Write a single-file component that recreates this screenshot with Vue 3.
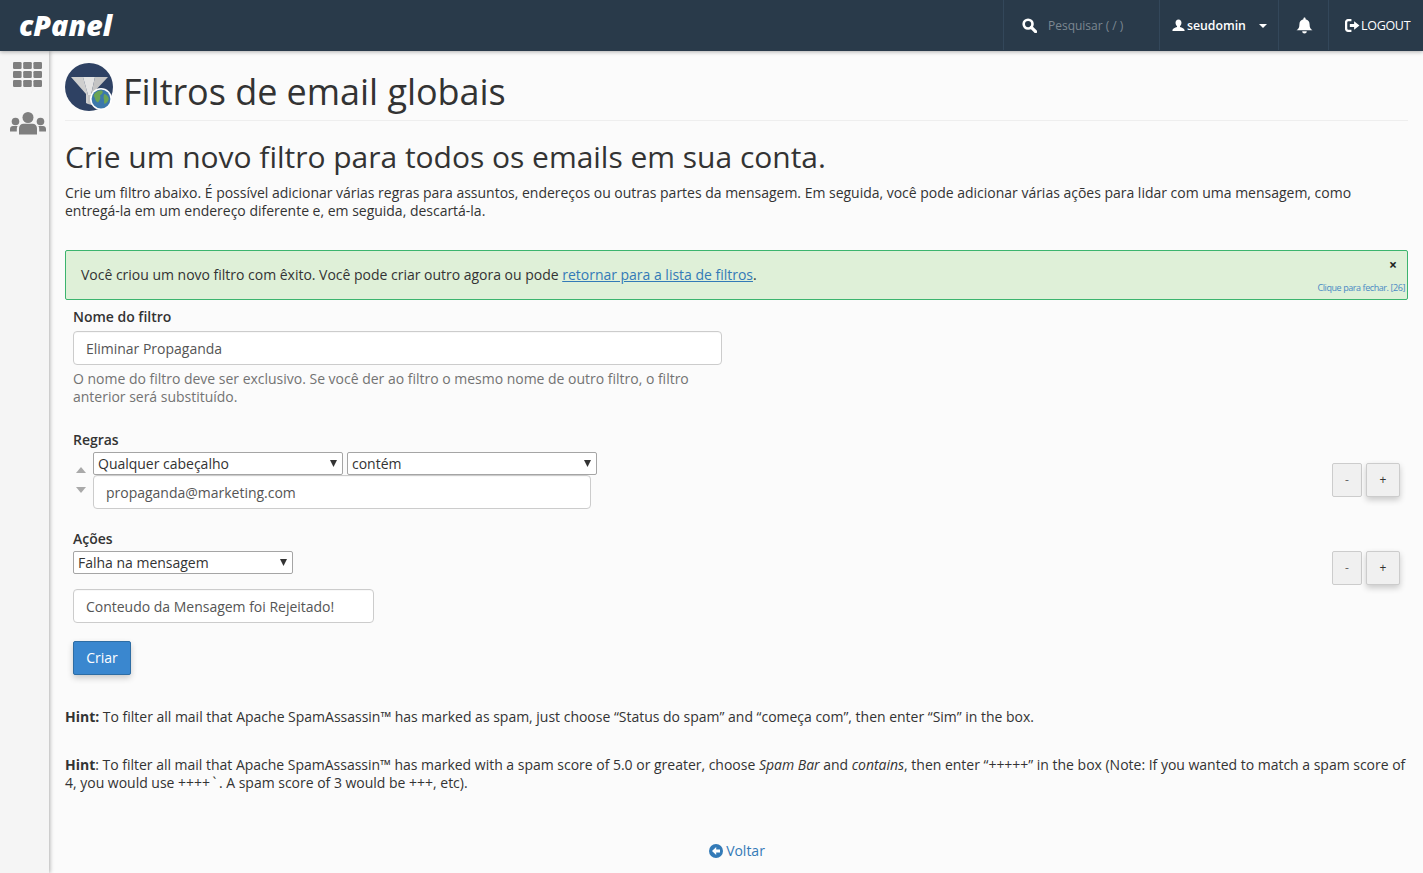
<script setup>
const gridCells = [0, 1, 2, 3, 4, 5, 6, 7, 8].map((i) => ({ x: (i % 3) * 10.2, y: Math.floor(i / 3) * 9, k: i }))
</script>

<template>
  <div class="page">
    <header class="topbar">
      <div class="logo">cPanel</div>
      <div class="nav">
        <div class="nav-item search">
          <svg class="ico-search" viewBox="0 0 16 16" width="15" height="15"><circle cx="6.500" cy="6.500" r="4.700" fill="none" stroke="#fff" stroke-width="2.800"/><path d="M10 10l4.500 4.500" stroke="#fff" stroke-width="3.400" stroke-linecap="round"/></svg>
          <span class="search-text">Pesquisar ( / )</span>
        </div>
        <div class="nav-item user">
          <svg viewBox="0 0 14 14" width="13" height="13"><path d="M7 0.500c2 0 3.200 1.500 3.200 3.600 0 1.600-.7 2.900-1.600 3.600v1c2.300.8 4.600 1.600 4.900 3.200v1.100H.5v-1.100c.3-1.600 2.600-2.400 4.900-3.200v-1C4.500 7 3.800 5.700 3.800 4.100 3.800 2 5 .5 7 .5z" fill="#fff"/></svg>
          <span class="user-name">seudomin</span>
          <span class="caret"></span>
        </div>
        <div class="nav-item bell">
          <svg viewBox="0 0 16 16" width="17" height="17"><path d="M8 0.500c.6 0 1 .4 1 1v.6c2.400.5 3.800 2.300 3.800 4.900 0 3 .8 4.200 2.700 5.500H.5c1.900-1.300 2.700-2.500 2.700-5.500C3.200 4.400 4.600 2.600 7 2.100v-.6c0-.6.4-1 1-1z" fill="#fff"/><path d="M5.800 13.300h4.400a2.200 2.200 0 0 1-4.400 0z" fill="#fff"/></svg>
        </div>
        <div class="nav-item logout">
          <svg viewBox="0 0 14 12" width="15" height="13"><path d="M6 1H3.200C1.900 1 1 1.900 1 3.200v5.600C1 10.100 1.900 11 3.200 11H6" fill="none" stroke="#fff" stroke-width="2.200"/><path d="M4.500 4.600h4V2l5 4-5 4V7.400h-4z" fill="#fff"/></svg>
          <span class="logout-text">LOGOUT</span>
        </div>
      </div>
    </header>

    <div class="body-row">
      <aside class="sidebar">
        <svg class="side-grid" viewBox="0 0 29 25" width="29" height="25">
          <rect v-for="c in gridCells" :key="c.k" :x="c.x" :y="c.y" width="8.600" height="7" rx="1.200" fill="#7f7f7f"/>
        </svg>
        <svg class="side-users" viewBox="0 0 36 23" width="36" height="23">
          <g fill="#7f7f7f">
            <circle cx="18" cy="5.500" r="5.500"/>
            <circle cx="5.500" cy="9.500" r="3.800"/>
            <circle cx="30.500" cy="9.500" r="3.800"/>
            <path d="M9 22.500v-6c0-3 2-4.800 4.500-4.800h9c2.500 0 4.500 1.800 4.500 4.800v6z"/>
            <path d="M0 19.500v-2.500c0-2 1.300-3 3-3h4.600C7 15 6.800 16 6.800 17v2.500z"/>
            <path d="M36 19.500v-2.500c0-2-1.300-3-3-3h-4.600c.6 1 .8 2 .8 3v2.500z"/>
          </g>
        </svg>
      </aside>

      <main class="content">
        <div class="title-row">
          <svg class="title-icon" viewBox="0 0 48 48" width="48" height="48">
            <circle cx="24" cy="24" r="24" fill="#2e4163"/>
            <path d="M6 14h12l5 18v9l-2-1v-9z" fill="#cfcfcf"/>
            <path d="M18 14h12l-4 18h-3z" fill="#e4e4e4"/>
            <path d="M30 14h13L27 31v11l-4-1v-9h3z" fill="#c4c4c4"/>
            <circle cx="36" cy="36" r="11" fill="#fff"/>
            <circle cx="36" cy="36" r="9.400" fill="#3c78ab"/>
            <path d="M29 31.500c2-3 5-4.500 8-4 2 2-.5 4-2 5 1 2.500 0 4.500-2 7-2.500-1-3-3.500-3.200-4.700-1-1-1.300-2.100-.8-3.300z" fill="#6aa455"/>
            <path d="M39 31c2.500.3 4.500 2.500 4.800 5-.7 2.500-2.600 4.500-4.200 5-1.300-2 .2-3.300-.9-5.500-.3-2 .2-3.500.3-4.500z" fill="#6aa455"/>
          </svg>
          <h1>Filtros de email globais</h1>
        </div>

        <h2>Crie um novo filtro para todos os emails em sua conta.</h2>
        <p class="intro">Crie um filtro abaixo. É possível adicionar várias regras para assuntos, endereços ou outras partes da mensagem. Em seguida, você pode adicionar várias ações para lidar com uma mensagem, como entregá-la em um endereço diferente e, em seguida, descartá-la.</p>

        <div class="alert">
          <span>Você criou um novo filtro com êxito. Você pode criar outro agora ou pode <a class="link">retornar para a lista de filtros</a>.</span>
          <span class="alert-close">×</span>
          <span class="alert-timer">Clique para fechar. [26]</span>
        </div>

        <form class="form" @submit.prevent>
          <label class="lbl first">Nome do filtro</label>
          <input class="field name-field" value="Eliminar Propaganda" />
          <p class="help">O nome do filtro deve ser exclusivo. Se você der ao filtro o mesmo nome de outro filtro, o filtro anterior será substituído.</p>

          <label class="lbl rules-lbl">Regras</label>
          <div class="rule-row">
            <div class="arrows">
              <span class="tri up"></span>
              <span class="tri down"></span>
            </div>
            <div class="rule-main">
              <div class="select-row">
                <select class="sel sel-a"><option>Qualquer cabeçalho</option></select>
                <select class="sel sel-b"><option>contém</option></select>
              </div>
              <input class="field rule-field" value="propaganda@marketing.com" />
            </div>
            <div class="pm pm-rule">
              <button type="button" class="pm-btn minus">-</button>
              <button type="button" class="pm-btn plus">+</button>
            </div>
          </div>

          <label class="lbl actions-lbl">Ações</label>
          <div class="action-row">
            <div>
              <select class="sel sel-c"><option>Falha na mensagem</option></select>
              <input class="field action-field" value="Conteudo da Mensagem foi Rejeitado!" />
            </div>
            <div class="pm">
              <button type="button" class="pm-btn minus">-</button>
              <button type="button" class="pm-btn plus">+</button>
            </div>
          </div>

          <button type="button" class="submit">Criar</button>
        </form>

        <p class="hint hint-a"><b>Hint:</b> To filter all mail that Apache SpamAssassin™ has marked as spam, just choose “Status do spam” and “começa com”, then enter “Sim” in the box.</p>
        <p class="hint hint-b"><b>Hint</b>: To filter all mail that Apache SpamAssassin™ has marked with a spam score of 5.0 or greater, choose <i>Spam Bar</i> and <i>contains</i>, then enter “+++++” in the box (Note: If you wanted to match a spam score of 4, you would use ++++<span class="tick">`</span>. A spam score of 3 would be +++, etc).</p>

        <div class="back">
          <svg viewBox="0 0 14 14" width="14" height="14"><circle cx="7" cy="7" r="7" fill="#337ab7"/><path d="M7.200 3L3 7l4.200 4V8.500H11v-3H7.200z" fill="#fff"/></svg>
          <a class="link-plain">Voltar</a>
        </div>
      </main>
    </div>
  </div>
</template>

<style scoped>
.page {
  width: 1423px;
  height: 873px;
  overflow: hidden;
  background: #fbfbfb;
  color: #333;
  font-family: "Open Sans", "Liberation Sans", sans-serif;
  font-size: 14px;
  line-height: 18px;
  letter-spacing: -0.012px;
}
.topbar {
  position: relative;
  z-index: 2;
  height: 51px;
  background: #293a4a;
  display: flex;
  justify-content: space-between;
  box-shadow: 0 1px 4px rgba(0, 0, 0, 0.3);
  color: #fff;
}
.logo {
  margin-left: 19px;
  font-weight: 800;
  font-style: italic;
  font-size: 28.500px;
  line-height: 50px;
  letter-spacing: 0;
}
.nav { display: flex; height: 50px; }
.nav-item {
  display: flex;
  align-items: center;
  border-left: 1px solid #33475a;
}
.search { width: 156px; padding-left: 18px; box-sizing: border-box; }
.search-text { margin-left: 11px; margin-top: 2px; color: #7c8791; font-size: 12px; }
.ico-search { flex: none; }
.user { width: 119px; box-sizing: border-box; padding-left: 12px; font-size: 12.300px; font-weight: 600; }
.user-name { margin-left: 2px; margin-top: 2px; }
.caret {
  margin-left: 13px;
  margin-top: 2px;
  border-left: 4px solid transparent;
  border-right: 4px solid transparent;
  border-top: 4px solid #fff;
}
.bell { width: 50px; justify-content: center; box-sizing: border-box; padding-left: 1px; }
.logout { width: 95px; box-sizing: border-box; padding-left: 16px; font-size: 12.500px; letter-spacing: -0.3px; }
.logout-text { margin-left: 1px; margin-top: 1px; }

.body-row { display: flex; height: 822px; }
.sidebar {
  position: relative;
  z-index: 1;
  width: 49px;
  flex: none;
  background: #f5f5f5;
  box-shadow: 1px 0 4px rgba(0, 0, 0, 0.3);
  display: flex;
  flex-direction: column;
  align-items: flex-start;
}
.side-grid { margin: 11px 0 0 13px; }
.side-users { margin: 25px 0 0 10px; }

.content { width: 1343px; margin-left: 16px; flex: none; }
.title-row {
  display: flex;
  align-items: flex-start;
  height: 69px;
  border-bottom: 1px solid #eee;
}
.title-icon { margin-top: 12px; flex: none; }
h1 {
  margin: 16px 0 0 10px;
  font-size: 36px;
  line-height: 50px;
  font-weight: 400;
  color: #333;
  letter-spacing: -0.04px;
}
h2 {
  margin: 19px 0 0;
  font-size: 30px;
  line-height: 33px;
  font-weight: 400;
  letter-spacing: -0.02px;
}
.intro { margin: 11px 0 0; }
.alert {
  position: relative;
  box-sizing: border-box;
  height: 50px;
  margin-top: 30px;
  padding: 15px;
  background: #dff0d8;
  border: 1px solid #3cb46e;
  border-radius: 2px;
}
.link { color: #337ab7; text-decoration: underline; }
.alert-close {
  position: absolute;
  right: 10px;
  top: 5px;
  color: #222;
  font-weight: 700;
  font-size: 14px;
}
.alert-timer {
  position: absolute;
  right: 2px;
  bottom: 5px;
  font-size: 9px;
  line-height: 12px;
  letter-spacing: -0.42px;
  color: #4a8ac4;
}
.form { padding-left: 8px; width: 1327px; }
.lbl { display: block; font-weight: 600; color: #333; }
.first { margin-top: 8px; }
.field {
  display: block;
  box-sizing: border-box;
  height: 34px;
  padding: 6px 12px;
  background: #fff;
  border: 1px solid #ccc;
  border-radius: 4px;
  font: inherit;
  letter-spacing: inherit;
  color: #555;
  outline: none;
  box-shadow: inset 0 1px 1px rgba(0, 0, 0, 0.03);
}
.name-field { width: 649px; margin-top: 5px; }
.help { width: 649px; margin: 5px 0 0; color: #737373; }
.rules-lbl { margin-top: 25px; }
.rule-row { display: flex; margin-top: 3px; position: relative; }
.arrows { width: 20px; flex: none; display: flex; flex-direction: column; align-items: flex-start; padding: 15px 0 0 3px; box-sizing: border-box; }
.tri { width: 0; height: 0; border-left: 5px solid transparent; border-right: 5px solid transparent; }
.up { border-bottom: 6px solid #a9a9a9; }
.down { margin-top: 14px; border-top: 6px solid #a9a9a9; }
.rule-main { flex: 1; }
.select-row { display: flex; gap: 4px; }
.sel {
  appearance: none;
  box-sizing: border-box;
  height: 23px;
  background-color: #fff;
  background-image: url("data:image/svg+xml,%3Csvg xmlns='http://www.w3.org/2000/svg' width='7' height='7'%3E%3Cpath d='M0 0h7L3.500 7z' fill='%23333'/%3E%3C/svg%3E");
  background-repeat: no-repeat;
  background-position: right 5px top 7px;
  border: 1px solid #a5a5a5;
  border-radius: 2px;
  font: inherit;
  letter-spacing: inherit;
  color: #333;
  padding: 0 0 0 4px;
}
.sel-a, .sel-b { width: 250px; }
.sel-c { width: 220px; display: block; }
.rule-field { width: 498px; }
.pm { display: flex; gap: 4px; flex: none; }
.pm-rule { margin-top: 11px; align-self: flex-start; }
.pm-btn {
  box-sizing: border-box;
  height: 34px;
  padding: 0;
  background: #f0f0f0;
  border: 1px solid #ccc;
  border-radius: 2px;
  font: inherit;
  font-size: 12px;
  color: #333;
}
.minus { width: 30px; color: #666; }
.plus { width: 34px; box-shadow: 0 3px 6px rgba(0, 0, 0, 0.2); }
.actions-lbl { margin-top: 21px; }
.action-row { display: flex; justify-content: space-between; margin-top: 3px; }
.action-field { width: 301px; margin-top: 15px; }
.submit {
  display: block;
  box-sizing: border-box;
  width: 58px;
  height: 34px;
  margin-top: 18px;
  background: #3a87cf;
  border: 1px solid #2e6da4;
  border-radius: 2px;
  color: #fff;
  font: inherit;
  box-shadow: 0 3px 6px rgba(0, 0, 0, 0.2);
}
.hint { margin: 0; }
.hint-a { margin-top: 33px; }
.hint-b { margin-top: 30px; }
.hint b { font-weight: 700; }
.tick { padding: 0 2.500px; }
.back {
  display: flex;
  justify-content: center;
  align-items: center;
  gap: 3px;
  padding-left: 1px;
  margin-top: 50px;
  color: #337ab7;
}
.link-plain { color: #337ab7; }
</style>

<style>
html, body { background: #fbfbfb; }
</style>
